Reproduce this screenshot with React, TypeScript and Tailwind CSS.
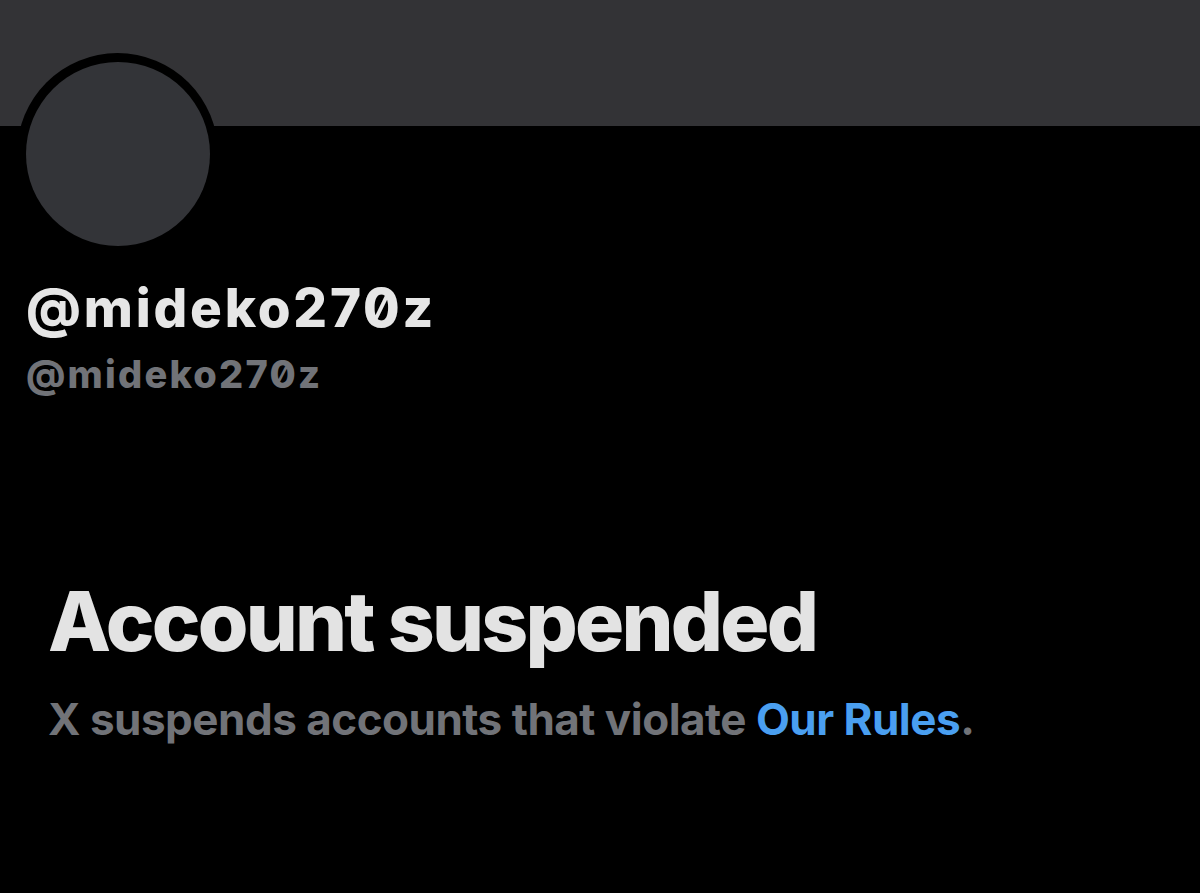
import React from "react";

export default function App() {
  return (
    <div
      className="w-[1200px] h-[893px] bg-black overflow-hidden flex flex-col"
      style={{ fontFamily: "Inter, 'Liberation Sans', sans-serif", fontFeatureSettings: "'zero' 1" }}
    >
      <div className="h-[126px] bg-[#333336] shrink-0 relative">
        <div className="absolute left-[17px] top-[53px] w-[201px] h-[201px] rounded-full bg-black flex items-center justify-center">
          <div className="w-[184px] h-[184px] rounded-full bg-[#333438]" />
        </div>
      </div>
      <div className="pl-[26px] pt-[152px]">
        <div className="text-[53px] font-extrabold text-[#e6e6e6] leading-[60px] tracking-[2.8px]">@mideko270z</div>
        <div className="text-[38px] font-extrabold text-[#717378] leading-[40px] mt-[16px] tracking-[2.2px]">@mideko270z</div>
      </div>
      <div className="pl-[48px] pt-[183px]">
        <div className="text-[82px] font-extrabold text-[#e3e3e3] leading-[90px] tracking-[-2.8px]">Account suspended</div>
        <div className="text-[44px] font-bold text-[#717378] leading-[52px] mt-[26px] tracking-[-0.5px]">
          X suspends accounts that violate <span className="text-[#4a9ff0]">Our Rules</span>.
        </div>
      </div>
    </div>
  );
}
